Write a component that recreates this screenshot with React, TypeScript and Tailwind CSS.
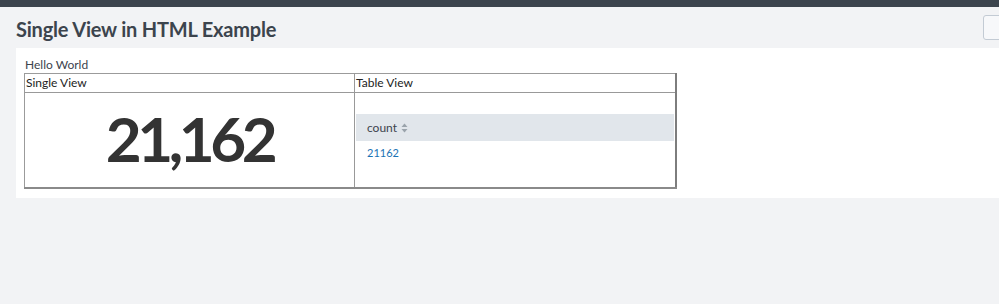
import React from "react";

const SortIcon = () => (
  <svg width="7" height="10" viewBox="0 0 7 10" className="ml-[4px] inline-block">
    <path d="M3.5 0.5 L6.5 4 L0.5 4 Z" fill="#9aa3ab" />
    <path d="M3.5 9.5 L6.5 6 L0.5 6 Z" fill="#9aa3ab" />
  </svg>
);

export default function App() {
  return (
    <div className="w-[999px] h-[304px] overflow-hidden bg-[#f2f3f5] font-['Lato','Liberation_Sans',sans-serif] text-[#3c444d]">
      {/* top bar */}
      <div className="h-[7px] bg-[#3c444d]" />

      {/* dashboard header */}
      <div className="flex items-center justify-between h-[41px] pl-4">
        <h1 className="text-[20px] font-bold leading-none tracking-[-0.2px] mt-[2px]">
          Single View in HTML Example
        </h1>
        <button className="h-[25px] w-[40px] mr-[-24px] rounded-[3px] border border-[#c3cbd4] bg-[#f7f8fa]" />
      </div>

      {/* panel */}
      <div className="ml-4 bg-white pt-[10px] pb-[9px] pl-[8px]">
        <div className="text-[12px] leading-[14px] pl-[1px] mb-[1px]">Hello World</div>
        <table className="w-[653px] border-collapse border border-[#9b9b9b] border-r-2 border-r-[#7d7d7d] border-b-2 border-b-[#8a8a8a] text-[12px] text-[#222]">
          <thead>
            <tr className="h-[19px]">
              <th className="w-[330px] border-b border-r border-[#999] text-left font-normal leading-[18px] pl-[1px]">
                Single View
              </th>
              <th className="border-b border-[#999] text-left font-normal leading-[18px] pl-[1px]">
                Table View
              </th>
            </tr>
          </thead>
          <tbody>
            <tr className="h-[94px]">
              <td className="border-r border-[#999] p-0">
                <div className="flex items-center justify-center h-[94px] pb-[4px]">
                  <span className="text-[62px] font-bold tracking-[-4.5px] text-[#333] leading-none">
                    21,162
                  </span>
                </div>
              </td>
              <td className="p-0 align-top">
                <div className="pt-[21px] px-[1px]">
                  <div className="h-[27px] bg-[#e1e6eb] flex items-center pl-[11px] text-[12px] text-[#3c444d]">
                    count
                    <SortIcon />
                  </div>
                  <div className="h-[24px] flex items-center pl-[11px] text-[11px] text-[#1a73b5]">
                    21162
                  </div>
                </div>
              </td>
            </tr>
          </tbody>
        </table>
      </div>
    </div>
  );
}
